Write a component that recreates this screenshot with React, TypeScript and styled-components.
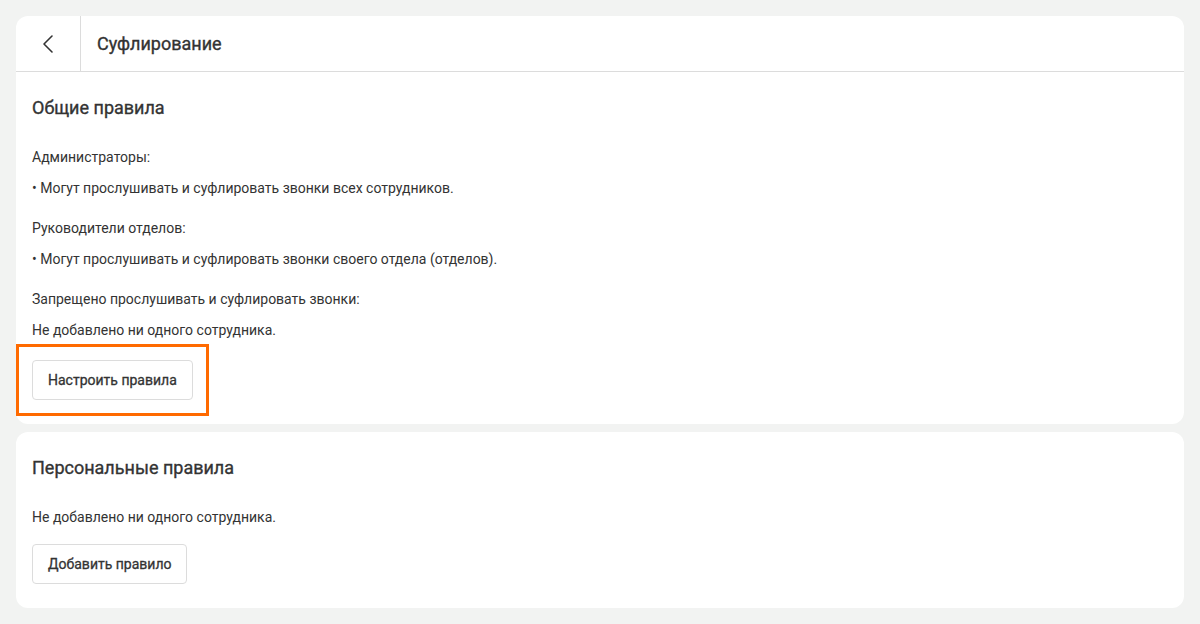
import React from 'react';
import styled, { createGlobalStyle } from 'styled-components';

const GlobalStyle = createGlobalStyle`
  html, body {
    margin: 0;
    padding: 0;
    background: #f2f3f2;
    font-family: Roboto, "Liberation Sans", Arial, sans-serif;
    color: #333333;
  }
`;

// --- Layout ---

const Page = styled.div`
  display: flex;
  flex-direction: column;
  gap: 8px;
  padding: 16px;
`;

const Card = styled.section`
  background: #ffffff;
  border-radius: 12px;
`;

const Header = styled.header`
  display: flex;
  align-items: stretch;
  height: 55px;
  border-bottom: 1px solid #dcdcdc;
`;

const BackButton = styled.button`
  width: 65px;
  display: flex;
  align-items: center;
  justify-content: center;
  border: none;
  border-right: 1px solid #dcdcdc;
  background: transparent;
  padding: 0;
  cursor: pointer;
  color: #333333;
`;

// medium weight is faked with a thin stroke (only regular/bold are installed)
const HeaderTitle = styled.h1`
  display: flex;
  align-items: center;
  margin: 0;
  padding-left: 16px;
  font-size: 18px;
  font-weight: 400;
  -webkit-text-stroke: 0.35px currentColor;
`;

const Body = styled.div`
  padding: 24px 16px;
`;

const SectionTitle = styled.h2`
  margin: 0 0 27px 0;
  font-size: 18px;
  line-height: 24px;
  font-weight: 400;
  -webkit-text-stroke: 0.35px currentColor;
`;

const Group = styled.div`
  display: flex;
  flex-direction: column;
  gap: 11px;
  margin-bottom: 20px;

  &:last-of-type {
    margin-bottom: 0;
  }
`;

const Text = styled.p`
  margin: 0;
  font-size: 14px;
  line-height: 20px;
`;

const Actions = styled.div<{ $top: number }>`
  margin-top: ${p => p.$top}px;
  display: flex;
`;

const Highlight = styled.div`
  position: relative;
  display: inline-flex;

  &::after {
    content: '';
    position: absolute;
    inset: -16px;
    border: 3px solid #ff6a00;
    pointer-events: none;
  }
`;

const Button = styled.button`
  height: 40px;
  padding: 0 15px;
  border: 1px solid #dcdcdc;
  border-radius: 4px;
  background: #ffffff;
  font-family: inherit;
  font-size: 14px;
  font-weight: 400;
  -webkit-text-stroke: 0.3px currentColor;
  color: #333333;
  cursor: pointer;
`;

function ChevronLeft() {
  return (
    <svg width="14" height="20" viewBox="0 0 14 20" fill="none">
      <path d="M11 2 L3 10 L11 18" stroke="currentColor" strokeWidth="1.6" strokeLinecap="round" strokeLinejoin="round" />
    </svg>
  );
}

export default function App() {
  return (
    <>
      <GlobalStyle />
      <Page>
        <Card>
          <Header>
            <BackButton aria-label="Назад">
              <ChevronLeft />
            </BackButton>
            <HeaderTitle>Суфлирование</HeaderTitle>
          </Header>
          <Body>
            <SectionTitle>Общие правила</SectionTitle>
            <Group>
              <Text>Администраторы:</Text>
              <Text>• Могут прослушивать и суфлировать звонки всех сотрудников.</Text>
            </Group>
            <Group>
              <Text>Руководители отделов:</Text>
              <Text>• Могут прослушивать и суфлировать звонки своего отдела (отделов).</Text>
            </Group>
            <Group>
              <Text>Запрещено прослушивать и суфлировать звонки:</Text>
              <Text>Не добавлено ни одного сотрудника.</Text>
            </Group>
            <Actions $top={19}>
              <Highlight>
                <Button>Настроить правила</Button>
              </Highlight>
            </Actions>
          </Body>
        </Card>
        <Card>
          <Body>
            <SectionTitle>Персональные правила</SectionTitle>
            <Text>Не добавлено ни одного сотрудника.</Text>
            <Actions $top={17}>
              <Button>Добавить правило</Button>
            </Actions>
          </Body>
        </Card>
      </Page>
    </>
  );
}
